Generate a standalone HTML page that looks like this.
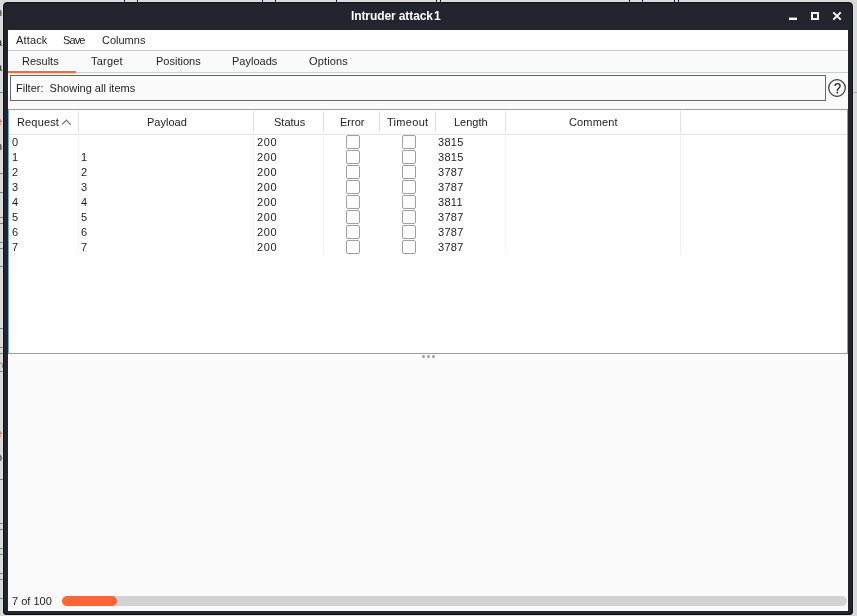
<!DOCTYPE html>
<html><head><meta charset="utf-8">
<style>
*{box-sizing:border-box;margin:0;padding:0}
html,body{width:857px;height:616px;overflow:hidden;background:#d9d9d9;font-family:"Liberation Sans",sans-serif;font-size:11px;color:#1e1e1e}
.a{position:absolute}
#win{left:3px;top:2px;width:850px;height:613px;background:#22252e;border:1px solid #0e1016;border-radius:4px 4px 3px 3px}
#glow{left:2px;top:1px;width:852px;height:615px;border:1px solid #e2e2e2;border-radius:5px 5px 4px 4px}
.vl{position:absolute;top:0;width:1px;height:3px;background:#1a1c22}
.hl{position:absolute;left:0;width:3px;height:1px;background:#7c818c}
#title{left:351px;top:9px;white-space:pre;will-change:transform;color:#fff;font-weight:bold;font-size:12px;line-height:14px;letter-spacing:-0.1px}
#content{left:8px;top:30px;width:840px;height:581px;background:#fafafa;overflow:hidden}
#menu{left:0;top:0;width:840px;height:21px;background:#fff;border-bottom:1px solid #cacaca}
.t{position:absolute;white-space:pre;line-height:13px;will-change:transform}
.n{letter-spacing:0.6px}
#tabs{left:0;top:21px;width:840px;height:22px;background:#fafafa;border-bottom:1px solid #ccd2d4}
#ul{left:0;top:41px;width:68px;height:2px;background:#ff6633;z-index:2}
#filter{left:2px;top:45px;width:816px;height:26px;border:1px solid #666;background:#fbfbfb}
#help{left:820px;top:49px;width:18px;height:18px}
#table{left:0;top:79px;width:840px;height:245px;background:#fff;border:1px solid #79a3d6}
.hs{position:absolute;top:1px;width:1px;height:22px;background:#e2e2e2}
.bs{position:absolute;top:25px;width:1px;height:120px;background:#f3f3f3}
#hline{left:0;top:24px;width:838px;height:1px;background:#e4e4e4}
.cb{position:absolute;width:14px;height:14px;border:1px solid #a0a0a0;border-radius:2px;background:#fff}
#split{left:0;top:324px;width:840px;height:5px;background:#fff}
.dot{position:absolute;top:1px;width:3px;height:3px;border-radius:50%;background:#a0a0a0}
#prog{left:54px;top:566px;width:785px;height:10px;border-radius:5px;background:#d2d2d2}
#fill{left:0;top:0;width:55px;height:10px;border-radius:5px;background:#ff6633}
</style></head><body>
<div id="glow" class="a"></div>
<div id="bg" class="a" style="left:0;top:0;width:857px;height:616px">
<div class="vl" style="left:124px"></div>
<div class="vl" style="left:137px"></div>
<div class="vl" style="left:262px"></div>
<div class="vl" style="left:275px"></div>
<div class="vl" style="left:336px"></div>
<div class="vl" style="left:436px"></div>
<div class="vl" style="left:440px"></div>
<div class="vl" style="left:629px"></div>
<div class="vl" style="left:642px"></div>
<div class="vl" style="left:674px"></div>
<div class="vl" style="left:678px"></div>
<div class="hl" style="top:92px"></div>
<div class="hl" style="top:173px"></div>
<div class="hl" style="top:192px"></div>
<div class="hl" style="top:217px"></div>
<div class="hl" style="top:223px"></div>
<div class="hl" style="top:242px"></div>
<div class="hl" style="top:248px"></div>
<div class="hl" style="top:266px"></div>
<div class="hl" style="top:328px"></div>
<div class="hl" style="top:347px"></div>
<div class="hl" style="top:353px"></div>
<div class="hl" style="top:371px"></div>
<div class="hl" style="top:479px"></div>
<div class="hl" style="top:523px"></div>
<div class="hl" style="top:529px"></div>
<div class="hl" style="top:548px"></div>
<div class="hl" style="top:554px"></div>
<div class="hl" style="top:573px"></div>
<div class="hl" style="top:579px"></div>
<div class="hl" style="top:598px"></div>
<div class="hl" style="left:853px;width:4px;top:92px;background:#b0b0b0"></div>
<span class="t" style="left:-4px;top:6px;font-size:11px;color:#222">n</span>
<span class="t" style="left:-4px;top:36px;font-size:11px;color:#222">a</span>
<span class="t" style="left:-4px;top:61px;font-size:11px;color:#222">a</span>
<span class="t" style="left:-4px;top:115px;font-size:11px;color:#e8561f">e</span>
<span class="t" style="left:-4px;top:140px;font-size:11px;color:#222">n</span>
<span class="t" style="left:-4px;top:427px;font-size:11px;color:#e8561f">e</span>
<span class="t" style="left:-4px;top:451px;font-size:11px;color:#222">o</span>
<span class="t" style="left:-4px;top:358px;font-size:11px;color:#555">∩</span>
</div>
<div id="win" class="a"></div>
<div id="title" class="a">Intruder attack<span style="letter-spacing:0">&#8202;</span>1</div>
<svg class="a" style="left:786px;top:10px" width="60" height="14" viewBox="0 0 60 14">
  <rect x="3" y="7.6" width="8" height="2.4" fill="#fff"/>
  <rect x="26" y="3" width="6" height="6" fill="none" stroke="#fff" stroke-width="2"/>
  <path d="M47.3 2.4 L54.7 9.6 M54.7 2.4 L47.3 9.6" stroke="#fff" stroke-width="2"/>
</svg>
<div id="content" class="a">
  <div id="menu" class="a">
    <span class="t" style="left:8px;top:4px;letter-spacing:0.15px">Attack</span>
    <span class="t" style="left:55px;top:4px;letter-spacing:-0.9px">Save</span>
    <span class="t" style="left:94px;top:4px">Columns</span>
  </div>
  <div id="tabs" class="a">
    <span class="t" style="left:14px;top:4px">Results</span>
    <span class="t" style="left:83px;top:4px;letter-spacing:0.2px">Target</span>
    <span class="t" style="left:148px;top:4px">Positions</span>
    <span class="t" style="left:224px;top:4px">Payloads</span>
    <span class="t" style="left:301px;top:4px;letter-spacing:0.15px">Options</span>
  </div>
  <div id="ul" class="a"></div>
  <div id="filter" class="a"><span class="t" style="left:5px;top:6px">Filter:  Showing all items</span></div>
  <svg id="help" class="a" viewBox="0 0 18 18"><circle cx="9" cy="9" r="8.3" fill="none" stroke="#333" stroke-width="1.2"/><path d="M7 7 C7.2 5.3 8.3 4.7 9.6 4.7 C11.1 4.7 12.1 5.6 12.1 7 C12.1 8.8 9.6 9.4 9.3 11.2 L9.3 12" fill="none" stroke="#222" stroke-width="1.3"/><circle cx="9.3" cy="13.6" r="0.95" fill="#222"/></svg>
  <div id="table" class="a">
    <div class="hs" style="left:69px"></div>
    <div class="hs" style="left:244px"></div>
    <div class="hs" style="left:314px"></div>
    <div class="hs" style="left:370px"></div>
    <div class="hs" style="left:426px"></div>
    <div class="hs" style="left:496px"></div>
    <div class="hs" style="left:671px"></div>
    <div id="hline" class="a"></div>
    <div class="bs" style="left:69px"></div>
    <div class="bs" style="left:244px"></div>
    <div class="bs" style="left:314px"></div>
            <div class="bs" style="left:496px"></div>
    <div class="bs" style="left:671px"></div>
    <span class="t" style="left:8px;top:6px;letter-spacing:0.15px">Request</span>
    <svg class="a" style="left:52px;top:9px" width="11" height="7" viewBox="0 0 11 7"><path d="M0.9 5.6 L5.4 1.2 L9.8 5.8" fill="none" stroke="#777" stroke-width="1.2"/></svg>
    <span class="t" style="left:138px;top:6px">Payload</span>
    <span class="t" style="left:265px;top:6px">Status</span>
    <span class="t" style="left:331px;top:6px">Error</span>
    <span class="t" style="left:378px;top:6px;letter-spacing:0.3px">Timeout</span>
    <span class="t" style="left:445px;top:6px">Length</span>
    <span class="t" style="left:560px;top:6px;letter-spacing:0.15px">Comment</span>
    <span class="t" style="left:3px;top:26px">0</span>
    <span class="t n" style="left:248px;top:26px">200</span>
    <div class="cb" style="left:337px;top:25px"></div>
    <div class="cb" style="left:393px;top:25px"></div>
    <span class="t" style="letter-spacing:0.3px;left:429px;top:26px">3815</span>
    <span class="t" style="left:3px;top:41px">1</span>
    <span class="t" style="left:72px;top:41px">1</span>
    <span class="t n" style="left:248px;top:41px">200</span>
    <div class="cb" style="left:337px;top:40px"></div>
    <div class="cb" style="left:393px;top:40px"></div>
    <span class="t" style="letter-spacing:0.3px;left:429px;top:41px">3815</span>
    <span class="t" style="left:3px;top:56px">2</span>
    <span class="t" style="left:72px;top:56px">2</span>
    <span class="t n" style="left:248px;top:56px">200</span>
    <div class="cb" style="left:337px;top:55px"></div>
    <div class="cb" style="left:393px;top:55px"></div>
    <span class="t" style="letter-spacing:0.3px;left:429px;top:56px">3787</span>
    <span class="t" style="left:3px;top:71px">3</span>
    <span class="t" style="left:72px;top:71px">3</span>
    <span class="t n" style="left:248px;top:71px">200</span>
    <div class="cb" style="left:337px;top:70px"></div>
    <div class="cb" style="left:393px;top:70px"></div>
    <span class="t" style="letter-spacing:0.3px;left:429px;top:71px">3787</span>
    <span class="t" style="left:3px;top:86px">4</span>
    <span class="t" style="left:72px;top:86px">4</span>
    <span class="t n" style="left:248px;top:86px">200</span>
    <div class="cb" style="left:337px;top:85px"></div>
    <div class="cb" style="left:393px;top:85px"></div>
    <span class="t" style="letter-spacing:0.3px;left:429px;top:86px">3811</span>
    <span class="t" style="left:3px;top:101px">5</span>
    <span class="t" style="left:72px;top:101px">5</span>
    <span class="t n" style="left:248px;top:101px">200</span>
    <div class="cb" style="left:337px;top:100px"></div>
    <div class="cb" style="left:393px;top:100px"></div>
    <span class="t" style="letter-spacing:0.3px;left:429px;top:101px">3787</span>
    <span class="t" style="left:3px;top:116px">6</span>
    <span class="t" style="left:72px;top:116px">6</span>
    <span class="t n" style="left:248px;top:116px">200</span>
    <div class="cb" style="left:337px;top:115px"></div>
    <div class="cb" style="left:393px;top:115px"></div>
    <span class="t" style="letter-spacing:0.3px;left:429px;top:116px">3787</span>
    <span class="t" style="left:3px;top:131px">7</span>
    <span class="t" style="left:72px;top:131px">7</span>
    <span class="t n" style="left:248px;top:131px">200</span>
    <div class="cb" style="left:337px;top:130px"></div>
    <div class="cb" style="left:393px;top:130px"></div>
    <span class="t" style="letter-spacing:0.3px;left:429px;top:131px">3787</span>
  </div>
  <div id="split" class="a">
    <div class="dot" style="left:414px"></div>
    <div class="dot" style="left:419px"></div>
    <div class="dot" style="left:424px"></div>
  </div>
  <span class="t" style="left:4px;top:565px">7 of 100</span>
  <div id="prog" class="a"><div id="fill" class="a"></div></div>
</div>
</body></html>
